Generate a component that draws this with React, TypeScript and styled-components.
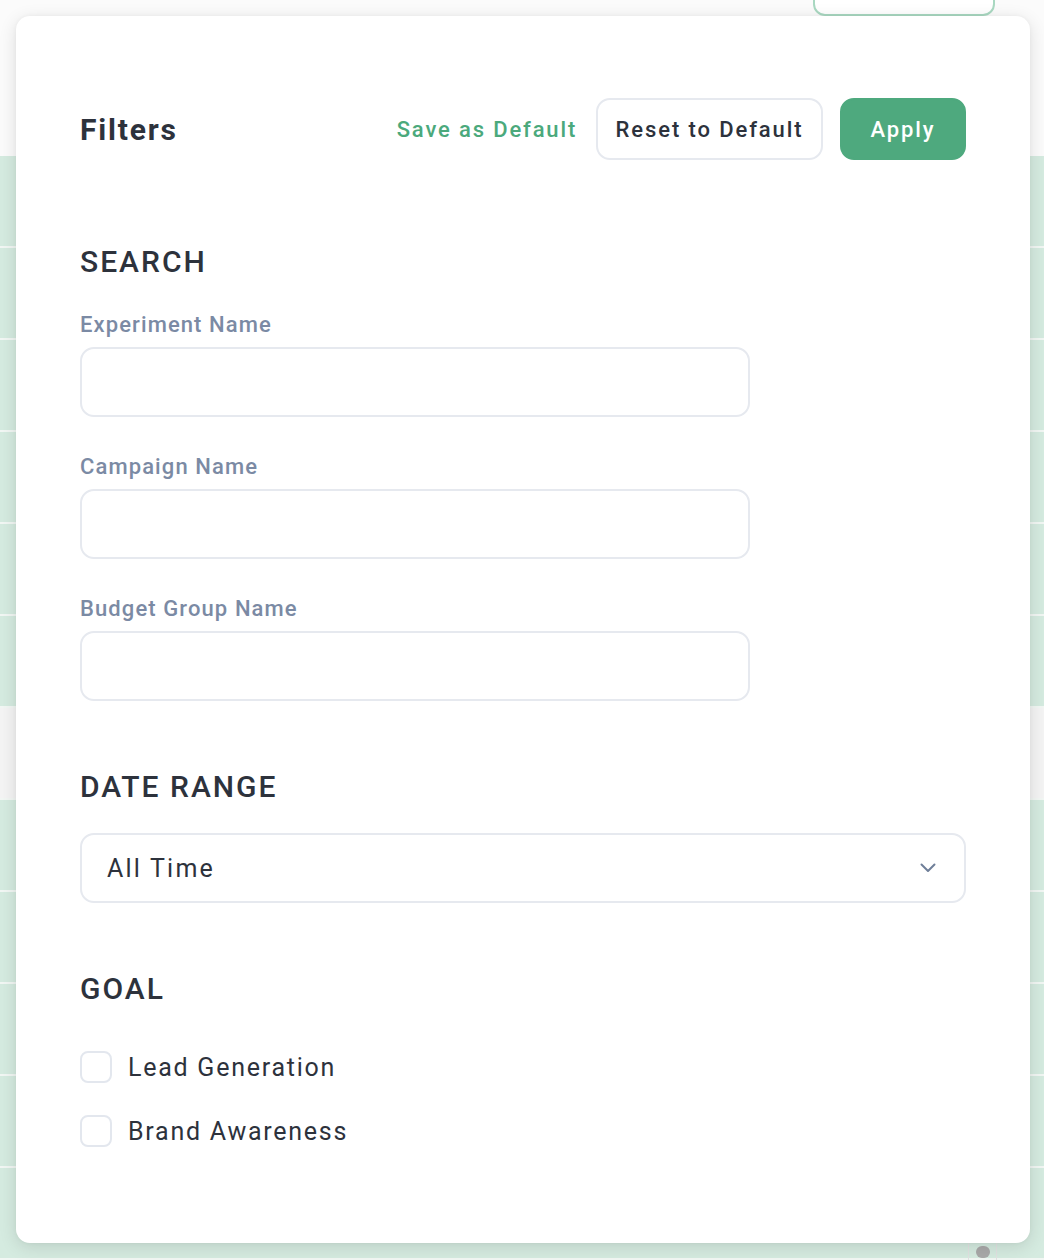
import React from 'react';
import styled, { createGlobalStyle } from 'styled-components';

const GlobalStyle = createGlobalStyle`
  html, body {
    margin: 0;
    padding: 0;
    background: #ffffff;
  }
  * {
    box-sizing: border-box;
  }
  body {
    font-family: Roboto, 'Noto Sans', 'Liberation Sans', sans-serif;
    -webkit-font-smoothing: antialiased;
  }
`;

const Screen = styled.div`
  position: relative;
  width: 1044px;
  height: 1260px;
  overflow: hidden;
  background: #ffffff;
`;

// page behind the modal
const Backdrop = styled.div`
  display: flex;
  flex-direction: column;
  height: 100%;
`;
const TopBar = styled.div`
  height: 158px;
  display: flex;
  justify-content: flex-end;
  align-items: flex-start;
  padding-right: 49px;
  background: #fbfbfb;
`;
const GhostButton = styled.div`
  width: 182px;
  height: 42px;
  margin-top: -26px;
  border: 2px solid #a9d8c1;
  border-radius: 12px;
  background: #ffffff;
`;
const Row = styled.div<{ muted?: boolean }>`
  height: 92px;
  flex-shrink: 0;
  background: ${(p) => (p.muted ? '#f4f4f4' : '#d5ebe0')};
  border-bottom: 2px solid #f2f7f4;
`;
const ScrollThumb = styled.div`
  position: absolute;
  left: 968px;
  top: 1240px;
  width: 29px;
  height: 24px;
  border-left: 1px solid #e2e2e2;
  border-right: 1px solid #e2e2e2;
  display: flex;
  justify-content: center;
  padding-top: 6px;
  &::after {
    content: '';
    width: 14px;
    height: 12px;
    border-radius: 7px;
    background: #a9a9a9;
  }
`;

// modal
const Panel = styled.div`
  position: absolute;
  left: 16px;
  top: 16px;
  width: 1014px;
  height: 1227px;
  background: #ffffff;
  border-radius: 14px;
  box-shadow: 0 4px 18px rgba(0, 0, 0, 0.12), 0 0 4px rgba(0, 0, 0, 0.04);
  padding: 82px 64px 0 64px;
  display: flex;
  flex-direction: column;
`;
const Header = styled.div`
  height: 62px;
  display: flex;
  align-items: center;
`;
const Title = styled.h1`
  margin: 0;
  flex: 1;
  font-size: 30px;
  font-weight: 700;
  letter-spacing: 1.8px;
  color: #2d323c;
`;
const LinkButton = styled.button`
  border: none;
  background: none;
  padding: 0;
  margin-right: 19px;
  font-family: inherit;
  font-size: 22px;
  font-weight: 500;
  letter-spacing: 1.85px;
  color: #4ba97c;
  cursor: pointer;
`;
const Button = styled.button<{ primary?: boolean }>`
  height: 62px;
  padding: 0 ${(p) => (p.primary ? 28.5 : 17.5)}px;
  border-radius: 14px;
  border: 2px solid ${(p) => (p.primary ? '#4ea97e' : '#e6e9ef')};
  background: ${(p) => (p.primary ? '#4ea97e' : '#ffffff')};
  color: ${(p) => (p.primary ? '#ffffff' : '#2d323c')};
  font-family: inherit;
  font-size: 22px;
  font-weight: 500;
  letter-spacing: 1.9px;
  margin-left: ${(p) => (p.primary ? 17 : 0)}px;
  cursor: pointer;
`;
const SectionTitle = styled.h2<{ gap: number }>`
  margin: ${(p) => p.gap}px 0 0 0;
  font-size: 30px;
  line-height: 36px;
  font-weight: 500;
  letter-spacing: 2px;
  color: #2d323c;
`;
const Label = styled.label<{ gap: number }>`
  display: block;
  margin-top: ${(p) => p.gap}px;
  font-size: 22px;
  line-height: 24px;
  font-weight: 500;
  letter-spacing: 1.1px;
  color: #7b8aa4;
`;
const Input = styled.input`
  display: block;
  width: 670px;
  height: 70px;
  margin-top: 10px;
  border: 2px solid #e6e9ef;
  border-radius: 14px;
  background: #ffffff;
  outline: none;
`;
const Select = styled.div`
  margin-top: 28px;
  height: 70px;
  border: 2px solid #e6e9ef;
  border-radius: 14px;
  display: flex;
  align-items: center;
  justify-content: space-between;
  padding: 0 28px 0 25px;
  font-size: 25px;
  letter-spacing: 2.2px;
  color: #2d323c;
`;
const Options = styled.div`
  margin-top: 44px;
  display: flex;
  flex-direction: column;
  gap: 32px;
`;
const CheckRow = styled.label`
  display: flex;
  align-items: center;
  gap: 16px;
  height: 32px;
  font-size: 25px;
  letter-spacing: 1.75px;
  color: #2d323c;
  cursor: pointer;
`;
const Box = styled.span`
  width: 32px;
  height: 32px;
  border: 2px solid #e3e7ee;
  border-radius: 8px;
  background: #ffffff;
`;

const Chevron = () => (
  <svg width="16" height="10" viewBox="0 0 16 10" fill="none">
    <path d="M1.5 1.5L8 8l6.5-6.5" stroke="#6f7f99" strokeWidth="2" strokeLinecap="round" strokeLinejoin="round" />
  </svg>
);

const fields = ['Experiment Name', 'Campaign Name', 'Budget Group Name'];
const goals = ['Lead Generation', 'Brand Awareness'];

const App = () => {
  return (
    <>
      <GlobalStyle />
      <Screen>
        <Backdrop>
          <TopBar>
            <GhostButton />
          </TopBar>
          {Array.from({ length: 12 }).map((_, i) => (
            <Row key={i} muted={i === 6} />
          ))}
        </Backdrop>
        <ScrollThumb />
        <Panel>
          <Header>
            <Title>Filters</Title>
            <LinkButton>Save as Default</LinkButton>
            <Button>Reset to Default</Button>
            <Button primary>Apply</Button>
          </Header>

          <SectionTitle gap={84}>SEARCH</SectionTitle>
          {fields.map((f, i) => (
            <React.Fragment key={f}>
              <Label gap={i === 0 ? 33 : 38}>{f}</Label>
              <Input />
            </React.Fragment>
          ))}

          <SectionTitle gap={68}>DATE RANGE</SectionTitle>
          <Select>
            <span>All Time</span>
            <Chevron />
          </Select>

          <SectionTitle gap={68}>GOAL</SectionTitle>
          <Options>
            {goals.map((g) => (
              <CheckRow key={g}>
                <Box />
                {g}
              </CheckRow>
            ))}
          </Options>
        </Panel>
      </Screen>
    </>
  );
};

export default App;
